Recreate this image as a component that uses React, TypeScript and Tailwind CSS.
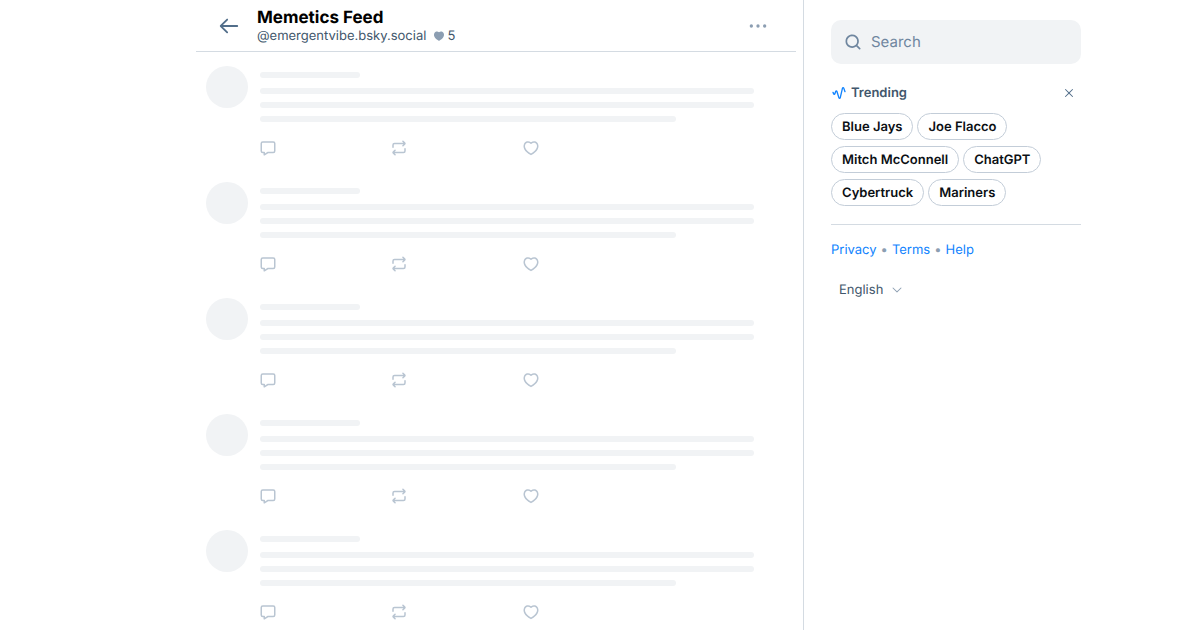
import type { ReactNode } from 'react';

function Icon({ className, children }: { className: string; children: ReactNode }) {
  return (
    <svg viewBox="0 0 24 24" fill="currentColor" fillRule="evenodd" clipRule="evenodd" aria-hidden="true" className={`shrink-0 ${className}`}>
      {children}
    </svg>
  );
}

const BUBBLE =
  'M2.002 6a3 3 0 0 1 3-3h14a3 3 0 0 1 3 3v10a3 3 0 0 1-3 3H12.28l-4.762 2.858A1 1 0 0 1 6.002 21v-2h-1a3 3 0 0 1-3-3V6Zm3-1a1 1 0 0 0-1 1v10a1 1 0 0 0 1 1h2a1 1 0 0 1 1 1v1.234l3.486-2.092a1 1 0 0 1 .514-.142h7a1 1 0 0 0 1-1V6a1 1 0 0 0-1-1h-14Z';
const REPOST =
  'M17.957 2.293a1 1 0 1 0-1.414 1.414L17.836 5H6a3 3 0 0 0-3 3v3a1 1 0 1 0 2 0V8a1 1 0 0 1 1-1h11.836l-1.293 1.293a1 1 0 0 0 1.414 1.414l2.47-2.47a1.75 1.75 0 0 0 0-2.474l-2.47-2.47ZM20 12a1 1 0 0 1 1 1v3a3 3 0 0 1-3 3H6.164l1.293 1.293a1 1 0 1 1-1.414 1.414l-2.47-2.47a1.75 1.75 0 0 1 0-2.474l2.47-2.47a1 1 0 0 1 1.414 1.414L6.164 17H18a1 1 0 0 0 1-1v-3a1 1 0 0 1 1-1Z';
const HEART =
  'M16.734 5.091c-1.238-.276-2.708.047-4.022 1.38a1 1 0 0 1-1.424 0C9.974 5.137 8.504 4.814 7.266 5.09c-1.263.282-2.379 1.206-2.92 2.556C3.33 10.18 4.252 14.84 12 19.348c7.747-4.508 8.67-9.168 7.654-11.7-.541-1.351-1.657-2.275-2.92-2.557Zm4.777 1.812c1.604 4-.494 9.69-9.022 14.47a1 1 0 0 1-.978 0C2.983 16.592.885 10.902 2.49 6.902c.779-1.942 2.414-3.334 4.342-3.764 1.697-.378 3.552.003 5.169 1.286 1.617-1.283 3.472-1.664 5.17-1.286 1.927.43 3.562 1.822 4.34 3.764Z';
const HEART_FILLED =
  'M12.489 21.372c8.528-4.78 10.626-10.47 9.022-14.47-.779-1.941-2.414-3.333-4.342-3.763-1.697-.378-3.552.003-5.169 1.287-1.617-1.284-3.472-1.665-5.17-1.287-1.927.43-3.562 1.822-4.34 3.764-1.605 4 .493 9.69 9.021 14.47a1 1 0 0 0 .978 0Z';
const TRENDING =
  'm18.192 5.004 1.864 5.31a1 1 0 0 0 1.887-.662L20.08 4.34c-.665-1.893-3.378-1.741-3.834.207l-3.381 14.449-2.985-9.605C9.3 7.531 6.684 7.506 6.07 9.355l-1.18 3.56-.969-2.312a1 1 0 0 0-1.844.772l.97 2.315c.715 1.71 3.159 1.613 3.741-.144l1.18-3.56 2.985 9.605c.607 1.952 3.392 1.848 3.857-.138l3.381-14.449Z';

const topics = ['Blue Jays', 'Joe Flacco', 'Mitch McConnell', 'ChatGPT', 'Cybertruck', 'Mariners'];

function PostPlaceholder() {
  return (
    <div className="flex gap-3 pt-3.5 pr-4 pb-[11px] pl-2.5">
      <div className="size-[42px] shrink-0 rounded-full bg-[#f1f3f5]" />
      <div className="flex-1 pt-1.5">
        <div className="h-1.5 w-[100px] rounded-md bg-[#f1f3f5]" />
        <div className="mt-2.5 flex flex-col gap-2">
          <div className="h-1.5 w-[95%] rounded-md bg-[#f1f3f5]" />
          <div className="h-1.5 w-[95%] rounded-md bg-[#f1f3f5]" />
          <div className="h-1.5 w-4/5 rounded-md bg-[#f1f3f5]" />
        </div>
        <div className="mt-[17px] -mr-1 -ml-px grid grid-cols-4 text-[#b9c5d2]">
          <Icon className="size-[18px]"><path d={BUBBLE} /></Icon>
          <Icon className="size-[18px]"><path d={REPOST} /></Icon>
          <Icon className="size-[18px]"><path d={HEART} /></Icon>
        </div>
      </div>
    </div>
  );
}

export default function App() {
  return (
    <div className="flex h-screen justify-center overflow-hidden bg-white pl-[77px] font-['Inter',sans-serif] text-[13px] leading-[17px] text-[#42576c] [text-rendering:geometricPrecision]">
      <main className="w-full max-w-[600px]">
        <header className="flex h-[52px] items-center border-b border-[#d4dbe2] px-[22px]">
          <button type="button" aria-label="Back" className="text-[#526e8a]">
            <Icon className="size-[22px]">
              <path d="M10.707 4.293a1 1 0 0 1 0 1.414L5.414 11H21a1 1 0 1 1 0 2H5.414l5.293 5.293a1 1 0 0 1-1.414 1.414l-7-7a1 1 0 0 1 0-1.414l7-7a1 1 0 0 1 1.414 0Z" />
            </Icon>
          </button>
          <div className="ml-[17px] flex-1 pt-0.5">
            <h1 className="text-[17px] leading-5 font-bold text-black [font-optical-sizing:none]">Memetics Feed</h1>
            <p className="flex items-start">
              @emergentvibe.bsky.social
              <Icon className="mt-0.5 mr-0.5 ml-[7px] size-3 text-[#8c9eb2]"><path d={HEART_FILLED} /></Icon>
              5
            </p>
          </div>
          <button type="button" aria-label="More options" className="p-1.5 text-[#8c9eb2]">
            <Icon className="size-5">
              <circle cx="4" cy="12" r="2" />
              <circle cx="12" cy="12" r="2" />
              <circle cx="20" cy="12" r="2" />
            </Icon>
          </button>
        </header>
        <PostPlaceholder />
        <PostPlaceholder />
        <PostPlaceholder />
        <PostPlaceholder />
        <PostPlaceholder />
      </main>
      <aside className="ml-[7px] shrink-0 border-l border-[#d4dbe2] pt-5 pl-[27px]">
        <div className="w-[250px]">
          <label className="flex h-11 items-center gap-2 rounded-[10px] bg-[#f1f3f5] px-3">
            <Icon className="size-5 text-[#6f869f]">
              <path d="M11 5a6 6 0 1 0 0 12 6 6 0 0 0 0-12Zm-8 6a8 8 0 1 1 14.32 4.906l3.387 3.387a1 1 0 0 1-1.414 1.414l-3.387-3.387A8 8 0 0 1 3 11Z" />
            </Icon>
            <input type="text" aria-label="Search" placeholder="Search" className="min-w-0 flex-1 text-[15px] leading-5 outline-none [text-rendering:geometricPrecision] placeholder:text-[#6f869f]" />
          </label>
          <section className="mt-[19px]">
            <div className="flex items-center">
              <Icon className="size-4 text-[#1083fe]"><path d={TRENDING} /></Icon>
              <h2 className="ml-1 flex-1 pt-0.5 font-semibold">Trending</h2>
              <button type="button" aria-label="Hide trending topics" className="mr-1.5 text-[#526e8a]">
                <Icon className="size-3">
                  <path d="M4.293 4.293a1 1 0 0 1 1.414 0L12 10.586l6.293-6.293a1 1 0 1 1 1.414 1.414L13.414 12l6.293 6.293a1 1 0 0 1-1.414 1.414L12 13.414l-6.293 6.293a1 1 0 0 1-1.414-1.414L10.586 12 4.293 5.707a1 1 0 0 1 0-1.414Z" />
                </Icon>
              </button>
            </div>
            <div className="mt-[11px] flex flex-wrap gap-x-1 gap-y-1.5">
              {topics.map((topic) => (
                <a key={topic} href="#" className="rounded-full border border-[#c3cdd8] px-2.5 pt-[5px] pb-[3px] font-semibold text-[#0b0f14]">
                  {topic}
                </a>
              ))}
            </div>
          </section>
          <hr className="mt-[18px] border-[#d4dbe2]" />
          <nav className="mt-[17px] flex gap-1 text-[#1083fe]">
            <a href="#">Privacy</a>
            <span className="text-[#8c9eb2]">•</span>
            <a href="#">Terms</a>
            <span className="text-[#8c9eb2]">•</span>
            <a href="#">Help</a>
          </nav>
          <div className="mt-[21px] flex items-center pl-2">
            <select aria-label="Language" className="appearance-none pt-0.5 [field-sizing:content] [text-rendering:geometricPrecision]">
              <option>English</option>
            </select>
            <Icon className="ml-2 size-3 text-[#8c9eb2]">
              <path d="M3.293 7.293a1 1 0 0 1 1.414 0L12 14.586l7.293-7.293a1 1 0 1 1 1.414 1.414l-8 8a1 1 0 0 1-1.414 0l-8-8a1 1 0 0 1 0-1.414Z" />
            </Icon>
          </div>
        </div>
      </aside>
    </div>
  );
}
